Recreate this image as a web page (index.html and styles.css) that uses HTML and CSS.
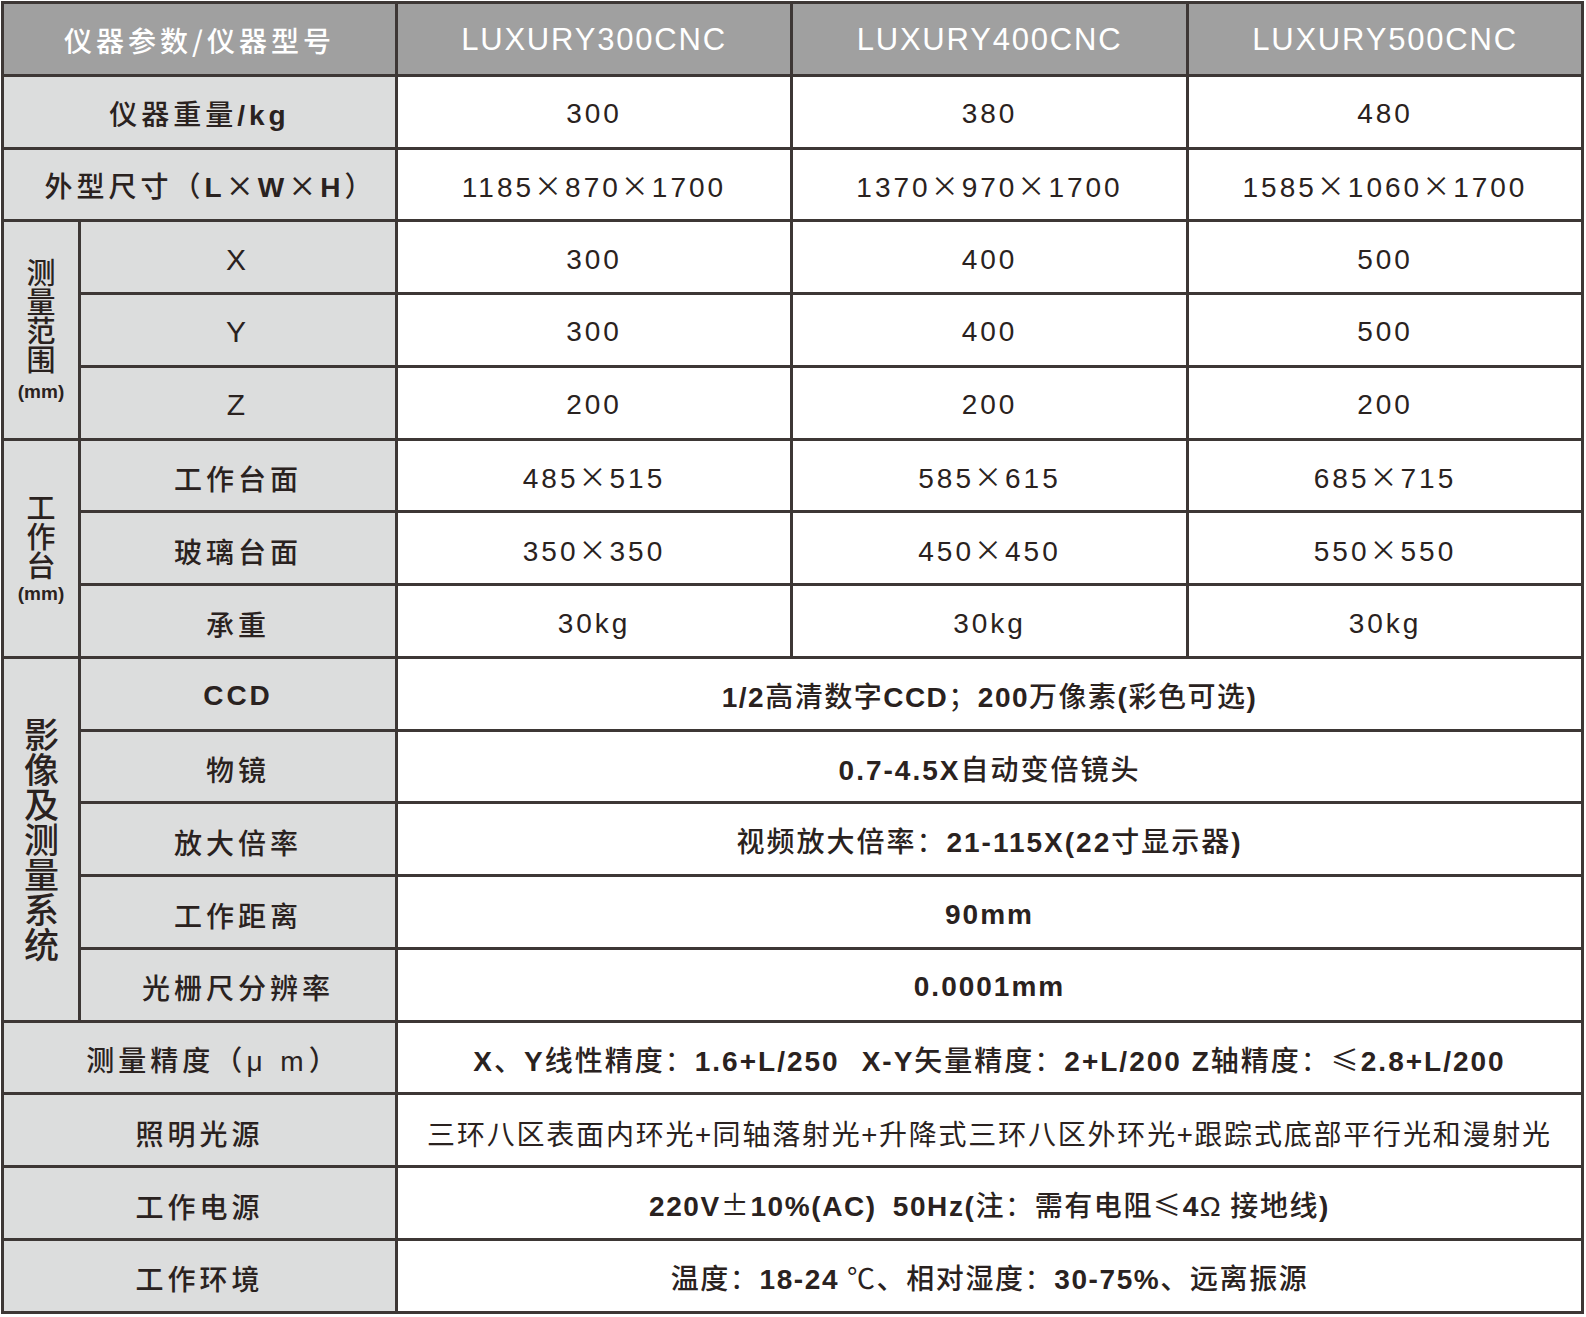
FILE: index.html
```html
<!DOCTYPE html>
<html lang="zh-CN">
<head>
<meta charset="utf-8">
<title>仪器参数</title>
<link rel="stylesheet" href="styles.css">
</head>
<body>
<div class="spec">
  <div class="cell head span2">仪器参数/仪器型号</div>
  <div class="cell head model">LUXURY300CNC</div>
  <div class="cell head model">LUXURY400CNC</div>
  <div class="cell head model">LUXURY500CNC</div>

  <div class="cell label span2"><span>仪器重量<b class="lat">/kg</b></span></div>
  <div class="cell val">300</div>
  <div class="cell val">380</div>
  <div class="cell val">480</div>

  <div class="cell label span2 shift-dim"><span>外型尺寸<span class="cj">（</span><b class="lat">L</b><span class="cj">×</span><b class="lat">W</b><span class="cj">×</span><b class="lat">H</b><span class="cj">）</span></span></div>
  <div class="cell val"><span>1185<span class="cj">×</span>870<span class="cj">×</span>1700</span></div>
  <div class="cell val"><span>1370<span class="cj">×</span>970<span class="cj">×</span>1700</span></div>
  <div class="cell val"><span>1585<span class="cj">×</span>1060<span class="cj">×</span>1700</span></div>

  <div class="cell label group rows3">
    <span class="vtext vt-small">测量范围</span>
    <span class="unit">(mm)</span>
  </div>
  <div class="cell label axis">X</div>
  <div class="cell val">300</div>
  <div class="cell val">400</div>
  <div class="cell val">500</div>
  <div class="cell label axis">Y</div>
  <div class="cell val">300</div>
  <div class="cell val">400</div>
  <div class="cell val">500</div>
  <div class="cell label axis">Z</div>
  <div class="cell val">200</div>
  <div class="cell val">200</div>
  <div class="cell val">200</div>

  <div class="cell label group rows3">
    <span class="vtext vt-small">工作台</span>
    <span class="unit unit-tight">(mm)</span>
  </div>
  <div class="cell label">工作台面</div>
  <div class="cell val"><span>485<span class="cj">×</span>515</span></div>
  <div class="cell val"><span>585<span class="cj">×</span>615</span></div>
  <div class="cell val"><span>685<span class="cj">×</span>715</span></div>
  <div class="cell label">玻璃台面</div>
  <div class="cell val"><span>350<span class="cj">×</span>350</span></div>
  <div class="cell val"><span>450<span class="cj">×</span>450</span></div>
  <div class="cell val"><span>550<span class="cj">×</span>550</span></div>
  <div class="cell label">承重</div>
  <div class="cell val">30kg</div>
  <div class="cell val">30kg</div>
  <div class="cell val">30kg</div>

  <div class="cell label group rows5">
    <span class="vtext vt-big">影像及测量系统</span>
  </div>
  <div class="cell label"><b class="lat ccd">CCD</b></div>
  <div class="cell wide tight"><span><b class="lat">1/2</b>高清数字<b class="lat">CCD</b><span class="cj">；</span><b class="lat">200</b>万像素<b class="lat">(</b>彩色可选<b class="lat">)</b></span></div>
  <div class="cell label">物镜</div>
  <div class="cell wide"><span><b class="lat">0.7-4.5X</b>自动变倍镜头</span></div>
  <div class="cell label">放大倍率</div>
  <div class="cell wide"><span>视频放大倍率<span class="cj">：</span><b class="lat">21-115X(22</b>寸显示器<b class="lat">)</b></span></div>
  <div class="cell label">工作距离</div>
  <div class="cell wide"><b class="lat">90mm</b></div>
  <div class="cell label">光栅尺分辨率</div>
  <div class="cell wide"><b class="lat">0.0001mm</b></div>

  <div class="cell label span2 shift-mu"><span>测量精度<span class="cj">（</span><span class="mu">μ m</span><span class="cj">）</span></span></div>
  <div class="cell wide"><span><b class="lat">X</b>、<b class="lat">Y</b>线性精度<span class="cj">：</span><b class="lat">1.6+L/250</b><span class="gap"></span><b class="lat">X-Y</b>矢量精度<span class="cj">：</span><b class="lat">2+L/200 Z</b>轴精度<span class="cj">：</span><span class="cj">≤</span><b class="lat">2.8+L/200</b></span></div>

  <div class="cell label span2">照明光源</div>
  <div class="cell wide light">三环八区表面内环光+同轴落射光+升降式三环八区外环光+跟踪式底部平行光和漫射光</div>

  <div class="cell label span2">工作电源</div>
  <div class="cell wide snug"><span><b class="lat">220V</b><span class="cj">±</span><b class="lat">10%(AC)</b><span class="gap gap-s"></span><b class="lat">50Hz(</b>注<span class="cj">：</span>需有电阻<span class="cj">≤</span><b class="lat">4</b><span class="omega">Ω</span> 接地线<b class="lat">)</b></span></div>

  <div class="cell label span2">工作环境</div>
  <div class="cell wide snug"><span>温度<span class="cj">：</span><b class="lat">18-24</b> <span class="cj">℃</span>、相对湿度<span class="cj">：</span><b class="lat">30-75%</b>、远离振源</span></div>
</div>
</body>
</html>
```

FILE: styles.css
```css
body {
  margin: 0;
  background: #ffffff;
}

.spec {
  display: grid;
  grid-template-columns: 77px 317px 395px 396px 395px;
  grid-auto-rows: 72.78px;
  width: max-content;
  margin: 1px 0 0 1px;
  border-left: 3px solid #3d3735;
  border-top: 3px solid #3d3735;
  font-family: "Liberation Sans", "Noto Sans CJK SC", sans-serif;
  color: #2a2220;
}

.cell {
  box-sizing: border-box;
  border-right: 3px solid #3d3735;
  border-bottom: 3px solid #3d3735;
  display: flex;
  align-items: center;
  justify-content: center;
  padding-top: 5px;
  font-size: 28px;
  line-height: 34px;
  letter-spacing: 3px;
  white-space: nowrap;
  background: #ffffff;
}

.cj {
  font-family: "Noto Sans CJK SC", sans-serif;
  font-weight: 400;
}

.lat {
  font-family: "Liberation Sans", "Noto Sans CJK SC", sans-serif;
  font-weight: 700;
}

.head {
  background: #a0a0a0;
  color: #ffffff;
  font-family: "Noto Sans CJK SC", sans-serif;
  font-weight: 500;
  letter-spacing: 4px;
  padding-top: 2px;
}

.head.model {
  font-family: "Liberation Sans", sans-serif;
  font-weight: 400;
  font-size: 31px;
  letter-spacing: 1.8px;
}

.span2 {
  grid-column: span 2;
}

.label {
  background: #dcdddd;
  font-family: "Noto Sans CJK SC", sans-serif;
  font-weight: 500;
  letter-spacing: 4px;
}

.label .cj {
  font-weight: 500;
}

.label.shift-dim {
  padding-left: 22px;
}

.label.shift-mu {
  padding-left: 28px;
}

.label.axis {
  font-family: "Liberation Sans", sans-serif;
  font-weight: 400;
  font-size: 30px;
}

.label .ccd {
  letter-spacing: 3px;
}

.label .mu {
  font-family: "Liberation Sans", sans-serif;
  font-weight: 400;
  letter-spacing: 5px;
}

.val {
  font-weight: 400;
}

.wide {
  grid-column: span 3;
  font-family: "Noto Sans CJK SC", sans-serif;
  font-weight: 500;
  letter-spacing: 2px;
}

.wide.tight {
  letter-spacing: 1.5px;
}

.wide.snug {
  letter-spacing: 1.6px;
}

.wide.light {
  font-weight: 400;
  letter-spacing: 1.8px;
}

.gap {
  display: inline-block;
  width: 22px;
}

.gap.gap-s {
  width: 16px;
}

.omega {
  font-family: "Liberation Sans", sans-serif;
  font-weight: 400;
}

.label.group {
  flex-direction: column;
  letter-spacing: 0;
  padding-top: 0;
}

.rows3 {
  grid-row: span 3;
}

.rows5 {
  grid-row: span 5;
}

.vtext {
  writing-mode: vertical-rl;
  text-orientation: upright;
  font-family: "Noto Sans CJK SC", sans-serif;
  font-weight: 500;
}

.vt-small {
  font-size: 29px;
  line-height: 30px;
  letter-spacing: 0;
}

.vt-big {
  font-size: 35px;
  line-height: 36px;
  letter-spacing: 0;
}

.unit {
  font-family: "Liberation Sans", sans-serif;
  font-weight: 700;
  font-size: 19px;
  line-height: 20px;
  margin-top: 8px;
}

.unit-tight {
  margin-top: 4px;
}
```
